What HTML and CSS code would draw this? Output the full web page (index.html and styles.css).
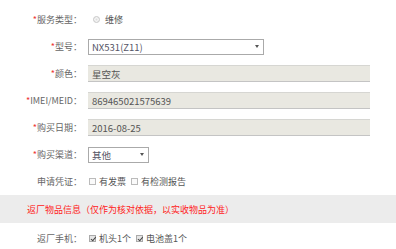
FILE: index.html
```html
<!DOCTYPE html>
<html lang="zh">
<head>
<meta charset="utf-8">
<link rel="stylesheet" href="styles.css">
</head>
<body>
<div class="form">
  <div class="row">
    <label class="lbl"><span class="req">*</span>服务类型：</label>
    <div class="ctrl"><span class="radio"></span><span class="opt">维修</span></div>
  </div>
  <div class="row">
    <label class="lbl"><span class="req">*</span>型号：</label>
    <div class="ctrl"><div class="select wide"><span>NX531(Z11)</span><span class="arrow"></span></div></div>
  </div>
  <div class="row">
    <label class="lbl"><span class="req">*</span>颜色：</label>
    <div class="ctrl"><div class="field">星空灰</div></div>
  </div>
  <div class="row">
    <label class="lbl"><span class="req">*</span>IMEI/MEID：</label>
    <div class="ctrl"><div class="field">869465021575639</div></div>
  </div>
  <div class="row">
    <label class="lbl"><span class="req">*</span>购买日期：</label>
    <div class="ctrl"><div class="field">2016-08-25</div></div>
  </div>
  <div class="row">
    <label class="lbl"><span class="req">*</span>购买渠道：</label>
    <div class="ctrl"><div class="select narrow"><span>其他</span><span class="arrow"></span></div></div>
  </div>
  <div class="row">
    <label class="lbl">申请凭证：</label>
    <div class="ctrl"><span class="cb"></span><span class="opt">有发票</span><span class="cb"></span><span class="opt">有检测报告</span></div>
  </div>
</div>
<div class="band">返厂物品信息（仅作为核对依据，以实收物品为准）</div>
<div class="row last">
  <label class="lbl">返厂手机：</label>
  <div class="ctrl"><span class="cb checked"></span><span class="opt">机头1个</span><span class="cb checked"></span><span class="opt">电池盖1个</span></div>
</div>
</body>
</html>
```
FILE: styles.css
```css
html, body { margin: 0; padding: 0; background: #fff; }
body {
  font-family: "Noto Sans CJK SC", "Noto Sans", sans-serif;
  font-size: 9px;
  color: #555;
  width: 396px;
  height: 249px;
  overflow: hidden;
}
.form { padding-top: 6px; }
.row {
  display: flex;
  align-items: center;
  height: 27px;
}
.row.last { height: 30px; }
.lbl {
  width: 82px;
  text-align: right;
  color: #666;
  white-space: nowrap;
  flex: none;
}
.req { color: #e33; }
.ctrl {
  display: flex;
  align-items: center;
  margin-left: 6px;
}
.radio {
  width: 7px;
  height: 7px;
  border-radius: 50%;
  background: #ddd;
  border: 1px solid #ccc;
  box-sizing: border-box;
  margin-left: 5px;
  margin-right: 5px;
  box-shadow: inset 0 0 0 1.5px #f4f4f4;
}
.opt { margin-right: 4px; color: #555; }
.select {
  height: 16px;
  border: 1px solid #aaa;
  box-sizing: border-box;
  display: flex;
  align-items: center;
  justify-content: space-between;
  padding: 0 4px 0 3px;
  color: #556;
  font-size: 9.5px;
}
.select.wide { width: 176px; }
.select.narrow { width: 61px; }
.arrow {
  width: 0;
  height: 0;
  border-left: 2.5px solid transparent;
  border-right: 2.5px solid transparent;
  border-top: 3px solid #555;
}
.field {
  width: 282px;
  height: 17px;
  box-sizing: border-box;
  background: #e9e8e1;
  border-top: 1px solid #d6d6d2;
  border-bottom: 1px solid #c4c4c4;
  display: flex;
  align-items: center;
  padding-left: 4px;
  color: #555;
  font-size: 9.5px;
}
.cb {
  width: 7px;
  height: 7px;
  border: 1px solid #bbb;
  box-sizing: border-box;
  background: #fafafa;
  margin-right: 3px;
  margin-left: 1px;
  position: relative;
}
.cb.checked { background: #e6e6e6; border-color: #aaa; }
.cb.checked::after {
  content: "";
  position: absolute;
  left: 1.5px;
  top: 0;
  width: 2px;
  height: 3.5px;
  border-right: 1px solid #444;
  border-bottom: 1px solid #444;
  transform: rotate(40deg);
}
.band {
  height: 28px;
  background: #ececec;
  color: #f22;
  display: flex;
  align-items: center;
  padding-left: 27px;
}
```
